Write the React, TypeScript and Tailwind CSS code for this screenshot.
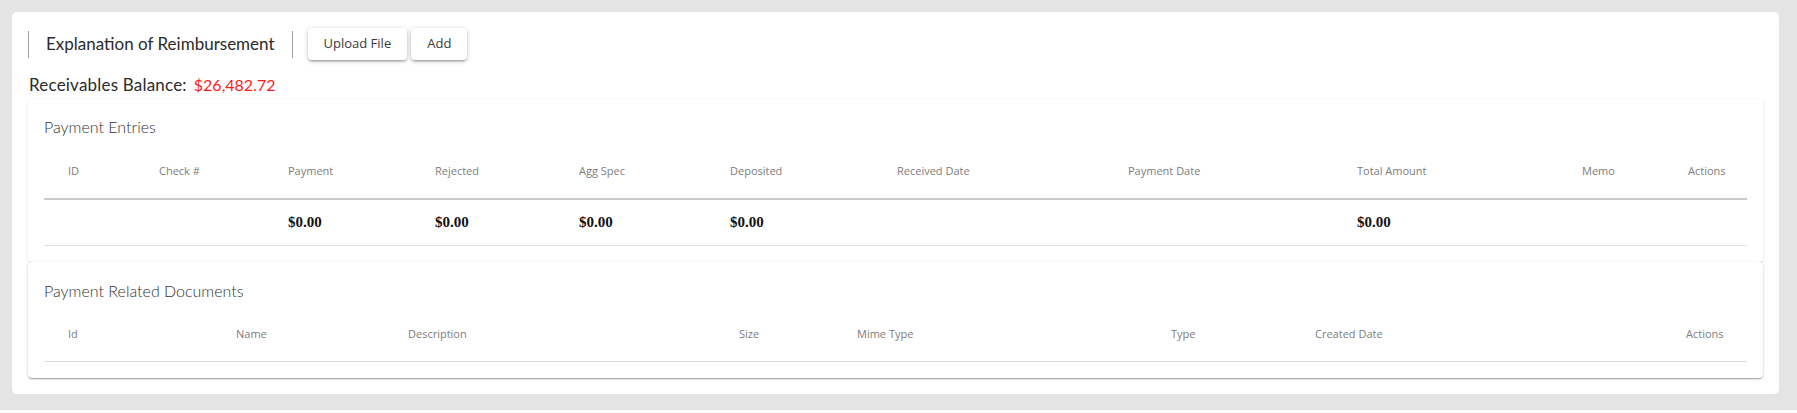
import React from 'react';

// Kolumny tabeli wpłat (szerokości zmierzone ze screena)
const ENTRY_COLUMNS = [
  'ID',
  'Check #',
  'Payment',
  'Rejected',
  'Agg Spec',
  'Deposited',
  'Received Date',
  'Payment Date',
  'Total Amount',
  'Memo',
  'Actions',
];

const ENTRY_TOTALS = ['', '', '$0.00', '$0.00', '$0.00', '$0.00', '', '', '$0.00', '', ''];

const DOC_COLUMNS = ['Id', 'Name', 'Description', 'Size', 'Mime Type', 'Type', 'Created Date', 'Actions'];

const raleway = { fontFamily: 'Lato, "Open Sans", sans-serif' };

function Button({ children }: { children: React.ReactNode }) {
  return (
    <button className="h-8 rounded-[4px] bg-white px-4 text-[13px] font-medium text-[#3a3a3a] shadow-[0_1px_5px_rgba(0,0,0,0.2),0_2px_2px_rgba(0,0,0,0.14),0_3px_1px_-2px_rgba(0,0,0,0.12)] [font-family:'Open_Sans',sans-serif]">
      {children}
    </button>
  );
}

export default function App() {
  return (
    <div className="bg-[#e4e4e4] pt-3 pl-3 pr-[18px] pb-4">
      <div className="rounded-[5px] bg-white p-4">
        {/* Nagłówek z tytułem i przyciskami */}
        <div className="flex items-center">
          <div
            className="flex h-[27px] items-center border-x border-[#a0a0a0] px-[17px] text-[17px] text-[#2b2b2b]"
            style={raleway}
          >
            Explanation of Reimbursement
          </div>
          <div className="ml-[15px] flex gap-1">
            <Button>Upload File</Button>
            <Button>Add</Button>
          </div>
        </div>

        {/* Saldo */}
        <div
          className="mt-[13px] flex h-6 items-center gap-[7px] pl-px leading-6 text-[#2b2b2b]"
          style={raleway}
        >
          <span className="text-[17px] tracking-[0.2px]">Receivables Balance:</span>
          <span className="text-[16px] text-[#ff1a1a]">$26,482.72</span>
        </div>

        {/* Payment Entries */}
        <div className="relative mt-[2px] rounded-[4px] bg-white px-4 pt-[16px] pb-4 shadow-[0_1px_3px_rgba(0,0,0,0.12),0_1px_1px_rgba(0,0,0,0.06)]">
          <h2 className="h-6 text-[16px] font-light leading-6 text-[#333]" style={raleway}>
            Payment Entries
          </h2>
          <div className="grid grid-cols-[91px_129px_147px_144px_151px_167px_231px_229px_225px_106px_85px] border-b-2 border-[#cbcbcb] text-[11px] text-[#7d7d7d] [font-family:'Open_Sans',sans-serif]">
            {ENTRY_COLUMNS.map((col) => (
              <div key={col} className="flex h-[59px] items-center pl-6 pt-[5px]">
                {col}
              </div>
            ))}
          </div>
          <div className="grid grid-cols-[91px_129px_147px_144px_151px_167px_231px_229px_225px_106px_85px] border-b border-[#e0e0e0] text-[15px] font-bold text-[#111] [font-family:'Liberation_Serif',serif]">
            {ENTRY_TOTALS.map((val, i) => (
              <div key={i} className="flex h-[45px] items-center pl-6">
                {val}
              </div>
            ))}
          </div>
        </div>

        {/* Payment Related Documents */}
        <div className="relative rounded-[4px] bg-white px-4 pt-[17px] pb-4 shadow-[0_1px_3px_rgba(0,0,0,0.2),0_1px_1px_rgba(0,0,0,0.14),0_2px_1px_-1px_rgba(0,0,0,0.12)]">
          <h2 className="h-6 text-[16px] font-light leading-6 text-[#333]" style={raleway}>
            Payment Related Documents
          </h2>
          <div className="grid grid-cols-[168px_172px_331px_118px_314px_144px_371px_87px] border-b border-[#dcdcdc] text-[11px] text-[#7d7d7d] [font-family:'Open_Sans',sans-serif]">
            {DOC_COLUMNS.map((col) => (
              <div key={col} className="flex h-[58px] items-center pl-6 pt-[5px]">
                {col}
              </div>
            ))}
          </div>
        </div>
      </div>
    </div>
  );
}
